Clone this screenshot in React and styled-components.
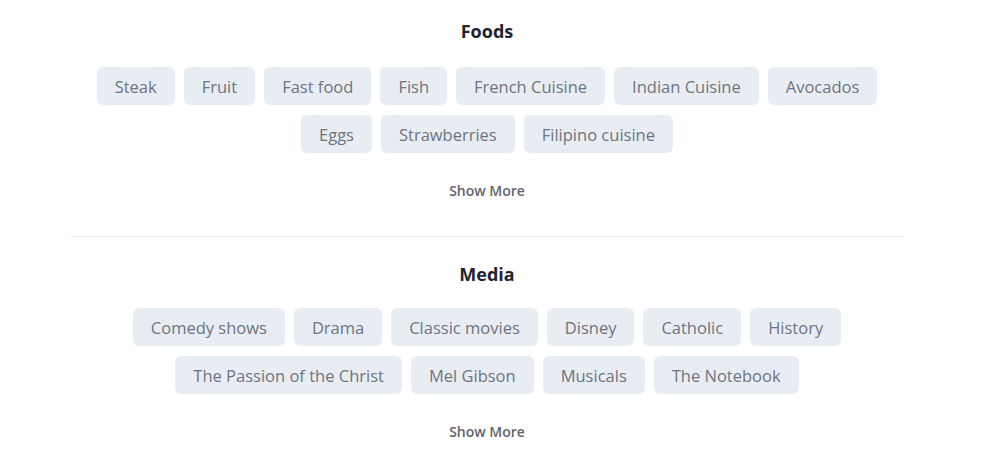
import styled, { createGlobalStyle } from "styled-components";

const GlobalStyle = createGlobalStyle`
  body {
    margin: 0;
    background: #ffffff;
    font-family: "Open Sans", "Noto Sans", sans-serif;
  }
`;

const Page = styled.div`
  width: 834px;
  margin-left: 70px;
`;

const Section = styled.section`
  padding: ${(p) => (p.$first ? "19px" : "25px")} 0 35px;
  border-bottom: ${(p) => (p.$last ? "none" : "1px solid #eceef1")};
  display: flex;
  flex-direction: column;
  align-items: center;
`;

const Title = styled.h2`
  margin: 0 0 ${(p) => (p.$first ? "24px" : "22px")};
  font-size: 18px;
  line-height: 24px;
  font-weight: 700;
  color: #1f2430;
`;

const Chips = styled.div`
  display: flex;
  flex-wrap: wrap;
  justify-content: center;
  gap: 10px 9px;
  padding: 0 24px;
`;

const Chip = styled.span`
  display: inline-flex;
  align-items: center;
  height: 38px;
  padding: 0 18px;
  border-radius: 6px;
  background: #e8edf3;
  color: #6e7480;
  font-size: 16.5px;
`;

const ShowMore = styled.button`
  margin-top: 28px;
  border: none;
  background: none;
  padding: 0;
  font-family: inherit;
  font-size: 14px;
  line-height: 20px;
  font-weight: 600;
  color: #5f636b;
  cursor: pointer;
`;

const groups = [
  {
    title: "Foods",
    items: [
      "Steak",
      "Fruit",
      "Fast food",
      "Fish",
      "French Cuisine",
      "Indian Cuisine",
      "Avocados",
      "Eggs",
      "Strawberries",
      "Filipino cuisine",
    ],
  },
  {
    title: "Media",
    items: [
      "Comedy shows",
      "Drama",
      "Classic movies",
      "Disney",
      "Catholic",
      "History",
      "The Passion of the Christ",
      "Mel Gibson",
      "Musicals",
      "The Notebook",
    ],
  },
];

export default function App() {
  return (
    <>
      <GlobalStyle />
      <Page>
        {groups.map((g, i) => (
          <Section key={g.title} $first={i === 0} $last={i === groups.length - 1}>
            <Title $first={i === 0}>{g.title}</Title>
            <Chips>
              {g.items.map((item) => (
                <Chip key={item}>{item}</Chip>
              ))}
            </Chips>
            <ShowMore>Show More</ShowMore>
          </Section>
        ))}
      </Page>
    </>
  );
}
